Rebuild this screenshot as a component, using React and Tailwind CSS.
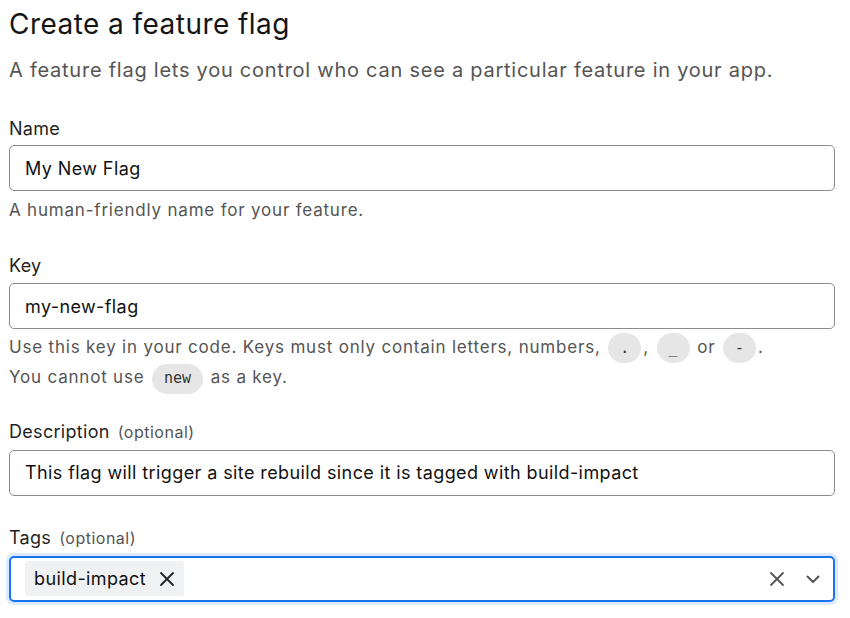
import React from 'react';

function Code({ children }) {
  return (
    <code className="inline-flex items-center h-[30px] px-[12px] mx-[2px] rounded-full bg-[#e6e6e6] text-[#333] text-[15px] tracking-normal align-middle font-['DejaVu_Sans_Mono',monospace]">
      {children}
    </code>
  );
}

function Label({ children, optional }) {
  return (
    <label className="block text-[18px] leading-[24px] tracking-[0.3px] text-[#1f1f1f]">
      {children}
      {optional && <span className="ml-[8px] text-[16px] tracking-[0.5px] text-[#555]">(optional)</span>}
    </label>
  );
}

function TextInput({ value }) {
  return (
    <div className="h-[46px] flex items-center border border-[#8c8c8c] rounded-[5px] px-[15px] text-[18px] tracking-[0.4px] text-[#111]">
      {value}
    </div>
  );
}

export default function App() {
  return (
    <div className="w-[850px] h-[618px] bg-white overflow-hidden pl-[9px] pr-[15px] pt-[7px] font-['Inter',sans-serif]">
      <h1 className="text-[28px] leading-[34px] tracking-[0.45px] text-[#151515]">Create a feature flag</h1>
      <p className="mt-[15px] text-[20px] leading-[28px] tracking-[0.75px] text-[#555]">
        A feature flag lets you control who can see a particular feature in your app.
      </p>

      <div className="mt-[33px]">
        <Label>Name</Label>
        <div className="mt-[4px]">
          <TextInput value="My New Flag" />
        </div>
        <p className="mt-[7px] text-[17px] leading-[24px] tracking-[0.8px] text-[#555]">A human-friendly name for your feature.</p>
      </div>

      <div className="mt-[32px]">
        <Label>Key</Label>
        <div className="mt-[5px]">
          <TextInput value="my-new-flag" />
        </div>
        <p className="mt-[4px] text-[17px] leading-[29px] tracking-[0.8px] text-[#555]">
          Use this key in your code. Keys must only contain letters, numbers, <Code>.</Code>, <Code>_</Code> or <Code>-</Code>.
          <br />
          You cannot use <Code>new</Code> as a key.
        </p>
      </div>

      <div className="mt-[26px]">
        <Label optional>Description</Label>
        <div className="mt-[6px]">
          <TextInput value="This flag will trigger a site rebuild since it is tagged with build-impact" />
        </div>
      </div>

      <div className="mt-[30px]">
        <Label optional>Tags</Label>
        <div className="mt-[6px] h-[46px] flex items-center border-2 border-[#1a73f0] rounded-[5px] ring-[3px] ring-[#dde9fc] pl-[14px] pr-[12px]">
          <span className="flex items-center h-[35px] bg-[#f0f1f3] rounded-[3px] pl-[9px] pr-[9px] text-[18px] tracking-[0.4px] text-[#111]">
            build-impact
            <svg className="ml-[13px]" width="16" height="16" viewBox="0 0 16 16" fill="none" stroke="#222" strokeWidth="1.8" strokeLinecap="round">
              <path d="M2 2l12 12M14 2L2 14" />
            </svg>
          </span>
          <div className="ml-auto flex items-center gap-[20px]">
            <svg width="16" height="16" viewBox="0 0 16 16" fill="none" stroke="#555" strokeWidth="1.8" strokeLinecap="round">
              <path d="M2 2l12 12M14 2L2 14" />
            </svg>
            <svg width="16" height="16" viewBox="0 0 16 16" fill="none" stroke="#555" strokeWidth="2" strokeLinecap="round" strokeLinejoin="round">
              <path d="M2.5 5.5L8 11l5.5-5.5" />
            </svg>
          </div>
        </div>
      </div>
    </div>
  );
}
